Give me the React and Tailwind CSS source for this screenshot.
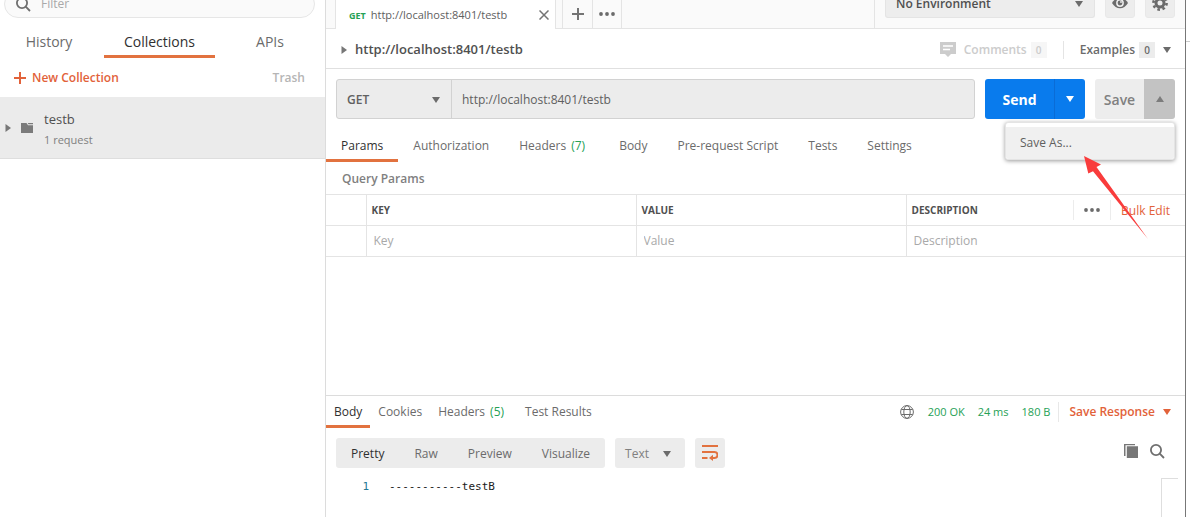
import React from "react";

function Caret({ dir = "down", className = "text-[#6b6b6b]" }) {
  const paths = { down: "M0 1h8L4 7z", up: "M0 7h8L4 1z", right: "M1.500 0v8L7 4z" };
  return (
    <svg viewBox="0 0 8 8" className={"h-2 w-2 shrink-0 " + className} fill="currentColor" aria-hidden="true">
      <path d={paths[dir]} />
    </svg>
  );
}

function SearchIcon() {
  return (
    <svg viewBox="0 0 16 16" className="h-4 w-4 shrink-0 text-[#6f6f6f]" fill="none" stroke="currentColor" strokeWidth="1.8" aria-hidden="true">
      <circle cx="7" cy="7" r="5.1" />
      <path d="M10.700 10.700l4.300 4.300" />
    </svg>
  );
}

function Dots() {
  return (
    <svg viewBox="0 0 16 4" className="h-1 w-4" fill="#6b6b6b" aria-hidden="true">
      <circle cx="2" cy="2" r="1.9" />
      <circle cx="8" cy="2" r="1.9" />
      <circle cx="14" cy="2" r="1.9" />
    </svg>
  );
}

function Sidebar() {
  return (
    <aside className="flex w-[326px] shrink-0 flex-col border-r border-[#dcdcdc] bg-white">
      <div className="h-[18px] overflow-hidden pr-2.5 pl-1">
        <label className="-mt-2.5 flex h-7 items-center gap-2.5 rounded-full border border-[#e6e6e6] bg-[#fafafa] pl-2.5">
          <SearchIcon />
          <input aria-label="Filter" placeholder="Filter" className="min-w-0 flex-1 bg-transparent text-xs outline-none placeholder:text-[#a9a9a9]" />
        </label>
      </div>
      <div role="tablist" className="mt-2.5 grid h-[30px] grid-cols-[1fr_111px_1fr] gap-1.5 pr-1.5 text-sm leading-[27px] text-[#6b6b6b]">
        <button role="tab" className="border-b-3 border-transparent">History</button>
        <button role="tab" aria-selected="true" className="border-b-3 border-[#e2723f] text-[#303030]">Collections</button>
        <button role="tab" className="border-b-3 border-transparent">APIs</button>
      </div>
      <div className="flex h-[39px] items-center justify-between pr-5 pl-3.5 text-xs font-semibold">
        <button className="flex items-center gap-1.5 text-[#e2623a]">
          <svg viewBox="0 0 12 12" className="h-3 w-3" stroke="currentColor" strokeWidth="2" aria-hidden="true"><path d="M6 0v12M0 6h12" /></svg>
          New Collection
        </button>
        <button className="text-[#b5b5b5]">Trash</button>
      </div>
      <button className="flex h-[62px] items-center border-b border-[#dedede] bg-[#ebebeb] pl-1 text-left">
        <Caret dir="right" className="mr-2 text-[#777777]" />
        <svg viewBox="0 0 14 12" className="h-3 w-3.5" aria-hidden="true" fill="#7b7b7b">
          <path d="M1 1h5.500l1.500 2.300h5V11H1z" /><path d="M7.700 1H13v1.300H8.500z" />
        </svg>
        <span className="ml-2.5 pt-0.5">
          <span className="block text-[13px] leading-[22px] text-[#505050]">testb</span>
          <span className="block text-[11px] leading-5 text-[#808080]">1 request</span>
        </span>
      </button>
    </aside>
  );
}

function TabBar() {
  return (
    <div className="flex h-[29px] shrink-0 bg-[#fafafa] text-[11px] text-[#606060]">
      <div className="w-2.5 border-r border-b border-[#e4e4e4]" />
      <div className="flex w-[220px] items-center border-r border-[#e4e4e4] bg-white pr-1.5 pl-[13px]">
        <span className="mr-[5px] pt-0.5 text-[9px] font-bold text-[#26a155]">GET</span>
        <span className="flex-1 pt-0.5">http://localhost:8401/testb</span>
        <button aria-label="Close tab">
          <svg viewBox="0 0 10 10" className="h-2.5 w-2.5" stroke="#747474" strokeWidth="1.500" aria-hidden="true"><path d="M.5.5l9 9M9.500.5l-9 9" /></svg>
        </button>
      </div>
      <div className="w-[7px] border-r border-b border-[#e4e4e4]" />
      <button aria-label="New tab" className="flex w-[30px] items-center justify-center border-r border-b border-[#e4e4e4]">
        <svg viewBox="0 0 12 12" className="h-3 w-3" stroke="#747474" strokeWidth="2" aria-hidden="true"><path d="M6 0v12M0 6h12" /></svg>
      </button>
      <button aria-label="Tab options" className="flex w-[29px] items-center justify-center border-r border-b border-[#e4e4e4]"><Dots /></button>
      <div className="flex-1 border-r border-b border-[#e4e4e4]" />
      <div className="flex gap-2.5 border-b border-[#e4e4e4] pr-2.5 pl-2.5">
        <div className="h-[18px]">
          <button className="flex h-[18px] w-[210px] items-start justify-between rounded-b-[3px] border-x border-b border-[#e4e4e4] bg-[#ededed] pr-[11px] pl-2.5 text-xs leading-2 font-semibold text-[#505050]">
            No Environment <Caret />
          </button>
        </div>
        <div className="h-[18px] overflow-hidden">
          <button aria-label="Environment quick look" className="-mt-3 flex h-[30px] w-[30px] items-center justify-center rounded-[3px] border border-[#e8e8e8] bg-[#ededed]">
            <svg viewBox="0 0 16 12" className="h-3 w-4" aria-hidden="true">
              <path d="M0 6Q3.300.700 8 .7T16 6Q12.700 11.300 8 11.300T0 6z" fill="#6b6b6b" />
              <circle cx="8" cy="6" r="3.900" fill="#ededed" /><circle cx="8" cy="6" r="2.400" fill="#6b6b6b" /><circle cx="9" cy="5" r=".9" fill="#ededed" />
            </svg>
          </button>
        </div>
        <div className="h-[18px] overflow-hidden">
          <button aria-label="Settings" className="-mt-3 flex h-[30px] w-[30px] items-center justify-center rounded-[3px] border border-[#e8e8e8] bg-[#ededed]">
            <svg viewBox="0 0 16 16" className="h-4 w-4" fill="none" stroke="#6b6b6b" aria-hidden="true">
              <circle cx="8" cy="8" r="4" strokeWidth="3" />
              <circle cx="8" cy="8" r="6.600" strokeWidth="2.600" strokeDasharray="2.590 2.590" />
            </svg>
          </button>
        </div>
      </div>
    </div>
  );
}

function TitleRow() {
  return (
    <div className="flex h-10 shrink-0 items-center border-b border-[#e0e0e0] pt-0.5 pr-3.5 pl-3.5 text-xs font-semibold">
      <Caret dir="right" className="mr-1.5 text-[#777777]" />
      <h1 className="flex-1 pl-px text-[13px] text-[#505050]">http://localhost:8401/testb</h1>
      <button className="flex items-center text-[#cccccc]">
        <svg viewBox="0 0 16 15" className="mr-2 h-[15px] w-4" aria-hidden="true">
          <path d="M0 0h16v12h-5l-3 3-3-3H0z" fill="#cccccc" /><path d="M3 4h10M3 7.500h7" stroke="#fff" strokeWidth="1.500" />
        </svg>
        Comments
        <span className="ml-1 w-4 bg-[#f6f6f6] text-center text-[10px] leading-4">0</span>
      </button>
      <div className="mx-4 h-[18px] w-px bg-[#e4e4e4]" />
      <button className="flex items-center text-[#6b6b6b]">
        Examples
        <span className="mr-2 ml-1 w-4 bg-[#ececec] text-center text-[10px] leading-4">0</span>
        <Caret />
      </button>
    </div>
  );
}

function RequestLine() {
  return (
    <div className="flex h-[60px] shrink-0 gap-2.5 px-2.5 py-2.5">
      <div className="flex min-w-0 flex-1 rounded-[3px] border border-[#d2d2d2] bg-[#ececec]">
        <button className="flex w-[115px] items-center justify-between border-r border-[#d2d2d2] pt-0.5 pr-[11px] pl-2.5 text-xs font-semibold text-[#606060]">
          GET <Caret />
        </button>
        <input aria-label="Request URL" defaultValue="http://localhost:8401/testb" className="min-w-0 flex-1 bg-transparent pt-0.5 pl-2.5 text-xs text-[#606060] outline-none" />
      </div>
      <div className="flex w-[100px] overflow-hidden rounded-[3px] bg-[#097bed] text-sm font-bold text-white">
        <button className="flex-1 border-r border-[#0a6cd6] pt-0.5">Send</button>
        <button aria-label="Send options" className="flex w-[30px] items-center justify-center"><Caret className="text-white" /></button>
      </div>
      <div className="relative flex w-20">
        <button className="flex-1 rounded-l-[3px] bg-[#ededed] pt-0.5 text-sm font-semibold text-[#808080]">Save</button>
        <button aria-label="Save options" aria-expanded="true" className="flex w-[31px] items-center justify-center rounded-r-[3px] bg-[#c3c3c3]"><Caret dir="up" className="text-[#7c7c7c]" /></button>
        <div role="menu" className="absolute top-full right-0 z-10 mt-[3px] w-[170px] rounded-[3px] border border-[#e4e4e4] bg-white pt-1 shadow-[0_1px_4px_rgba(0,0,0,0.4)]">
          <button role="menuitem" className="block h-8 w-full rounded-b-[3px] bg-[#f0f0f0] px-3.5 text-left text-xs text-[#606060]">Save As...</button>
        </div>
        <svg viewBox="0 0 65 85" className="pointer-events-none absolute top-[77px] right-[26px] z-20 h-[85px] w-[65px]" fill="#f93c3c" aria-hidden="true">
          <path d="M0 0L17 8.500L12.500 11L64 83L9 15.300L4.300 17.500Z" />
        </svg>
      </div>
    </div>
  );
}

function RequestTabs() {
  const tabs = ["Authorization", "Body", "Pre-request Script", "Tests", "Settings"];
  const tabClass = "border-b-3 border-transparent px-[15px] pt-1";
  return (
    <div role="tablist" className="flex h-[33px] shrink-0 text-xs text-[#6b6b6b]">
      <button role="tab" aria-selected="true" className="border-b-3 border-[#e2723f] px-[15px] pt-1 text-[#303030]">Params</button>
      {tabs.map((tab) => (
        <React.Fragment key={tab}>
          <button role="tab" className={tabClass}>{tab}</button>
          {tab === "Authorization" && (
            <button role="tab" className="mr-1 border-b-3 border-transparent px-[15px] pt-1">
              Headers<span className="ml-[5px] text-[#26a155]">(7)</span>
            </button>
          )}
        </React.Fragment>
      ))}
    </div>
  );
}

function ParamsTable() {
  const cell = "border-y border-r border-[#e4e4e4] p-0 text-left";
  const field = "block w-full bg-transparent px-[7px] text-xs outline-none placeholder:text-[#a9a9a9]";
  return (
    <table className="w-full table-fixed border-collapse">
      <colgroup><col className="w-10" /><col className="w-[270px]" /><col className="w-[270px]" /><col /></colgroup>
      <thead>
        <tr className="h-[31px] text-[10px] font-semibold text-[#505050]">
          <th className={cell} aria-label="Enabled" />
          <th className={cell}><span className="pl-[5px]">KEY</span></th>
          <th className={cell}><span className="pl-[5px]">VALUE</span></th>
          <th className="border-y border-[#e4e4e4] p-0 text-left">
            <div className="flex items-center pr-[15px]">
              <span className="flex-1 pl-[5px]">DESCRIPTION</span>
              <button aria-label="Column options" className="flex h-5 w-[38px] items-center justify-center border-x border-[#ececec]"><Dots /></button>
              <button className="ml-2.5 pt-0.5 text-xs font-normal text-[#e2623a]">Bulk Edit</button>
            </div>
          </th>
        </tr>
      </thead>
      <tbody>
        <tr className="h-[31px]">
          <td className={cell} />
          <td className={cell}><input aria-label="Key" placeholder="Key" className={field} /></td>
          <td className={cell}><input aria-label="Value" placeholder="Value" className={field} /></td>
          <td className="border-y border-[#e4e4e4] p-0"><input aria-label="Description" placeholder="Description" className={field} /></td>
        </tr>
      </tbody>
    </table>
  );
}

function ResponsePanel() {
  return (
    <section className="flex shrink-0 flex-col border-t border-[#dcdcdc]">
      <div className="flex h-8 items-stretch text-xs text-[#6b6b6b]">
        <div role="tablist" className="flex flex-1">
          <button role="tab" aria-selected="true" className="border-b-3 border-[#e2723f] px-2 pt-0.5 text-[#303030]">Body</button>
          <button role="tab" className="border-b-3 border-transparent px-2 pt-0.5">Cookies</button>
          <button role="tab" className="border-b-3 border-transparent px-2 pt-0.5">Headers<span className="ml-[5px] text-[#26a155]">(5)</span></button>
          <button role="tab" className="ml-[5px] border-b-3 border-transparent px-2 pt-0.5">Test Results</button>
        </div>
        <div className="flex items-center pr-3.5 leading-8 text-[#26a155]">
          <svg viewBox="0 0 14 14" className="mr-3.5 h-3.5 w-3.5" fill="none" stroke="#6b6b6b" aria-hidden="true">
            <circle cx="7" cy="7" r="6.400" /><ellipse cx="7" cy="7" rx="3.200" ry="6.400" /><path d="M1.300 4.500h11.400M1.300 9.500h11.400" />
          </svg>
          <span className="mr-[13px] text-[11px]">200 OK</span>
          <span className="mr-[13px] text-[11px]">24 ms</span>
          <span className="mr-2 text-[11px]">180 B</span>
          <span className="mr-2.5 h-5 w-px bg-[#e8e8e8]" />
          <button className="flex items-center gap-2 font-semibold text-[#e2623a]">Save Response <Caret className="text-[#e2623a]" /></button>
        </div>
      </div>
      <div className="mt-2.5 flex h-[30px] items-center gap-2.5 pr-5 pl-2.5 text-xs text-[#6b6b6b]">
        <div className="flex h-full rounded-[3px] bg-[#ececec]">
          <button className="px-[15px] pt-0.5 text-[#303030]">Pretty</button>
          <button className="px-[15px] pt-0.5">Raw</button>
          <button className="px-[15px] pt-0.5">Preview</button>
          <button className="px-[15px] pt-0.5">Visualize</button>
        </div>
        <button className="flex h-full w-[70px] items-center justify-between rounded-[3px] bg-[#ececec] pt-0.5 pr-3.5 pl-2.5 text-[#808080]">Text <Caret /></button>
        <button aria-label="Wrap lines" className="flex h-full w-[30px] items-center justify-center rounded-[3px] bg-[#ececec]">
          <svg viewBox="0 0 16 16" className="h-4 w-4" fill="none" stroke="#e2723f" strokeWidth="2" aria-hidden="true">
            <path d="M0 1h16M0 7h12.500a3 3 0 0 1 0 6H10M0 13h5.500" /><path d="M11 9.800v6.200l-4-3.100z" fill="#e2723f" stroke="none" />
          </svg>
        </button>
        <div className="flex flex-1 items-center justify-end gap-[11px] pb-1">
          <button aria-label="Copy">
            <svg viewBox="0 0 14 14" className="h-3.5 w-3.5" fill="#777777" aria-hidden="true"><path d="M2.800 2.300H14V14H2.800zM0 0h11v1.300H1.500V12H0z" /></svg>
          </button>
          <button aria-label="Search response"><SearchIcon /></button>
        </div>
      </div>
      <div className="flex h-[49px] pt-2.5 pr-[7px] font-['DejaVu_Sans_Mono',monospace] text-[11px] leading-[18px]">
        <span className="w-[43px] text-right text-[#237893]">1</span>
        <pre className="ml-5 flex-1 font-[inherit] text-[#202020]">-----------testB</pre>
        <div className="h-full w-[17px] border-t border-l border-[#dedede]" />
      </div>
    </section>
  );
}

export default function App() {
  return (
    <div className="flex min-h-screen overflow-hidden bg-white font-['Open_Sans',sans-serif]">
      <Sidebar />
      <main className="flex min-w-0 flex-1 flex-col">
        <TabBar />
        <TitleRow />
        <RequestLine />
        <RequestTabs />
        <h2 className="flex h-8 shrink-0 items-center pt-0.5 pl-4 text-xs font-semibold text-[#808080]">Query Params</h2>
        <ParamsTable />
        <div className="flex-1" />
        <ResponsePanel />
      </main>
      <div className="w-[5px] shrink-0 border-l border-[#777777]">
        <div className="h-[42px] border-b border-[#cccccc]" />
      </div>
    </div>
  );
}
